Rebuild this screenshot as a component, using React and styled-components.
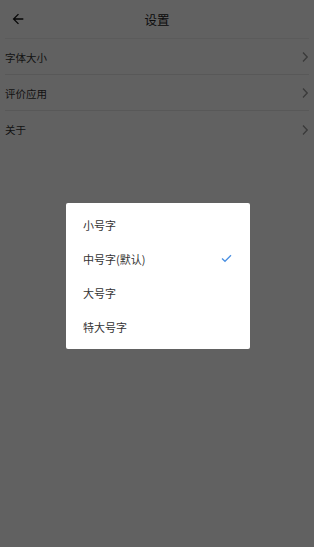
import React from "react";
import styled, { createGlobalStyle } from "styled-components";

const Global = createGlobalStyle`
  html, body { margin: 0; padding: 0; background: #fff; }
  body { font-family: "Noto Sans CJK SC", "Noto Sans", sans-serif; }
  * { box-sizing: border-box; }
`;

const Page = styled.div`
  width: 314px;
  height: 547px;
  background: #fff;
  position: relative;
  overflow: hidden;
`;

const Header = styled.div`
  height: 39px;
  margin: 0 5px;
  display: grid;
  grid-template-columns: 30px 1fr 30px;
  align-items: center;
  border-bottom: 1px solid #f0f0f0;
`;

const BackBtn = styled.div`
  display: flex;
  align-items: center;
  padding-left: 5px;
`;

const Title = styled.div`
  text-align: center;
  font-size: 12.5px;
  color: #222;
`;

const List = styled.div`
  display: flex;
  flex-direction: column;
`;

const Row = styled.div`
  height: 36px;
  margin: 0 5px;
  display: flex;
  align-items: center;
  justify-content: space-between;
  border-bottom: ${(p) => (p.$last ? "none" : "1px solid #e8e8e8")};
  font-size: 10.5px;
  color: #333;
  padding-top: 1px;
`;

const Overlay = styled.div`
  position: absolute;
  inset: 0;
  background: rgba(0, 0, 0, 0.62);
  display: flex;
  align-items: center;
  justify-content: center;
`;

const Dialog = styled.div`
  width: 184px;
  margin-top: 4px;
  margin-left: 2px;
  background: #fff;
  border-radius: 2px;
  padding: 5px 0;
  display: flex;
  flex-direction: column;
`;

const Option = styled.div`
  height: 34px;
  padding: 0 18px 0 17px;
  display: flex;
  align-items: center;
  justify-content: space-between;
  font-size: 11px;
  color: #333;
`;

const Chevron = () => (
  <svg width="8" height="12" viewBox="0 0 8 12">
    <path d="M2 1.5 L6.2 6 L2 10.5" fill="none" stroke="#999" strokeWidth="1.4" />
  </svg>
);

const Check = () => (
  <svg width="11" height="9" viewBox="0 0 11 9">
    <path d="M1 4.5 L4 7.3 L10 1.3" fill="none" stroke="#4a90e2" strokeWidth="1.3" />
  </svg>
);

const items = ["字体大小", "评价应用", "关于"];
const options = [
  { label: "小号字" },
  { label: "中号字(默认)", checked: true },
  { label: "大号字" },
  { label: "特大号字" },
];

export default function App() {
  return (
    <>
      <Global />
      <Page>
        <Header>
          <BackBtn>
            <svg width="16" height="16" viewBox="0 0 24 24">
              <path d="M20 11H7.83l5.59-5.59L12 4l-8 8 8 8 1.41-1.41L7.83 13H20v-2z" fill="#111" />
            </svg>
          </BackBtn>
          <Title>设置</Title>
          <div />
        </Header>
        <List>
          {items.map((t, i) => (
            <Row key={t} $last={i === items.length - 1}>
              <span>{t}</span>
              <Chevron />
            </Row>
          ))}
        </List>
        <Overlay>
          <Dialog>
            {options.map((o) => (
              <Option key={o.label}>
                <span>{o.label}</span>
                {o.checked && <Check />}
              </Option>
            ))}
          </Dialog>
        </Overlay>
      </Page>
    </>
  );
}
